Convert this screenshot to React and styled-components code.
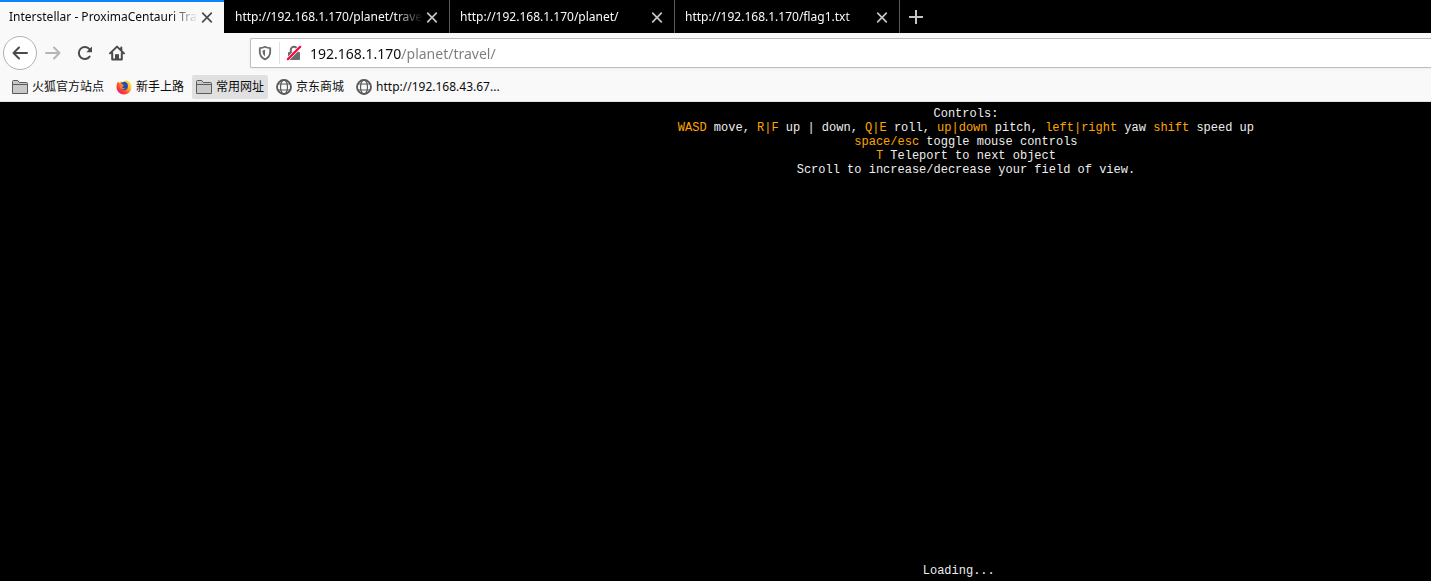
import React from 'react';
import styled, { createGlobalStyle, css } from 'styled-components';

const GlobalStyle = createGlobalStyle`
  *, *::before, *::after { box-sizing: border-box; }
  body {
    margin: 0;
    background: #000;
    font-family: "Noto Sans", "Noto Sans CJK SC", sans-serif;
    font-size: 12px;
    line-height: 16px;
    color: #0c0c0d;
    overflow-x: hidden;
  }
  button, input { font: inherit; color: inherit; margin: 0; }
  svg { display: block; flex: none; }
`;

const Browser = styled.div`
  display: flex;
  flex-direction: column;
  min-height: 100vh;
`;

const TabStrip = styled.div`
  display: flex;
  height: 33px;
  background: #000;
`;

const Tab = styled.div`
  display: flex;
  align-items: center;
  flex: 0 1 225px;
  min-width: 0;
  padding: 0 8px 0 10px;
  background: #000;
  color: #f9f9fa;
  border-left: 1px solid ${({ $divided }) => ($divided ? '#5a5a5a' : 'transparent')};
  ${({ $active }) => $active && css`
    flex-basis: 224px;
    padding-left: 9px;
    background: #f9f9f9;
    color: #0c0c0d;
    border-left: 0;
    box-shadow: inset 0 2px #0a84ff;
  `}
`;

const TabTitle = styled.button`
  flex: 1 1 0;
  min-width: 0;
  height: 33px;
  padding: 0;
  border: 0;
  background: none;
  text-align: left;
  white-space: nowrap;
  overflow: hidden;
  mask-image: linear-gradient(to left, transparent, #000 28px);
`;

const IconButton = styled.button`
  display: flex;
  align-items: center;
  justify-content: center;
  flex: none;
  width: ${({ $size }) => $size}px;
  height: ${({ $size }) => $size}px;
  padding: 0;
  border: 0;
  border-radius: 2px;
  background: none;
  color: ${({ $color }) => $color};
`;

const NewTabArea = styled.div`
  display: flex;
  align-items: center;
  border-left: 1px solid #5a5a5a;
`;

const NavBar = styled.div`
  display: flex;
  align-items: center;
  height: 40px;
  padding-left: 3px;
  background: #f9f9f9;
`;

const BackButton = styled(IconButton)`
  border: 1px solid #b1b1b1;
  border-radius: 50%;
  background: #fff;
`;

const NavButtons = styled.div`
  display: flex;
  align-items: center;
  width: 247px;
`;

const AddressBar = styled.form`
  display: flex;
  align-items: center;
  flex: 1;
  height: 30px;
  padding-left: 3px;
  border: 1px solid #bdbdbd;
  border-right: 0;
  border-radius: 2px 0 0 2px;
  background: #fff;
  box-shadow: 0 1px 3px rgba(0, 0, 0, 0.05);
`;

const Divider = styled.span`
  width: 1px;
  height: 22px;
  margin: 0 4px 0 3px;
  background: #e1e1e1;
`;

const AddressInput = styled.input`
  flex: 1;
  min-width: 0;
  height: 26px;
  padding: 0;
  margin-left: 6px;
  border: 0;
  outline: 0;
  font-size: 14px;
  color: transparent;
  caret-color: #0c0c0d;
  background: linear-gradient(to right, #0c0c0d 92px, #7c7c7d 92px);
  background-clip: text;
`;

const BookmarkBar = styled.nav`
  display: flex;
  align-items: center;
  height: 29px;
  padding-left: 8px;
  gap: 4px;
  background: #f9f9f9;
  border-bottom: 1px solid #e0e0e1;
`;

const Bookmark = styled.a`
  display: flex;
  align-items: center;
  gap: 4px;
  height: 24px;
  padding: 0 4px;
  border-radius: 2px;
  color: #0c0c0d;
  text-decoration: none;
  white-space: nowrap;
  background: ${({ $highlighted }) => ($highlighted ? '#e0e0e1' : 'none')};
`;

const Page = styled.main`
  display: flex;
  flex-direction: column;
  justify-content: space-between;
  flex: 1;
  padding: 5px 0 3px;
  background: #000;
  color: #eee;
  font-family: "Liberation Mono", monospace;
  font-size: 12px;
  line-height: 14px;
  text-align: center;
  white-space: nowrap;
`;

const Controls = styled.section`
  padding-left: 35%;
`;

const Line = styled.div``;

const Key = styled.b`
  font-weight: 400;
  color: #ffa500;
`;

const Loading = styled.div`
  padding-left: 34%;
`;

const Stroke = ({ size = 16, width = 2, children }) => (
  <svg width={size} height={size} viewBox="0 0 16 16" fill="none" stroke="currentColor"
    strokeWidth={width} strokeLinecap="round" strokeLinejoin="round" aria-hidden="true">
    {children}
  </svg>
);

const CloseIcon = () => <Stroke width={1.7}><path d="M3.7 4.2l8.6 8.6M12.3 4.2l-8.6 8.6" /></Stroke>;
const PlusIcon = () => <Stroke><path d="M8 1v14M1 8h14" strokeLinecap="butt" /></Stroke>;
const BackIcon = () => <Stroke><path d="M15 8H1.5M7 2.5L1.5 8 7 13.5" /></Stroke>;
const ForwardIcon = () => <Stroke><path d="M1 8h13.5M9 2.5L14.5 8 9 13.5" /></Stroke>;
const ReloadIcon = () => (
  <Stroke>
    <path d="M12.6 11.6A6 6 0 1 1 12.5 4.2" />
    <path d="M15 1.5v5.7H9.3z" fill="currentColor" stroke="none" />
  </Stroke>
);
const HomeIcon = () => (
  <Stroke>
    <path d="M1 8.4L8 1.6l7 6.8M3.2 8v6.6h9.6V8M12.3 2.5v3" />
    <path d="M6 14V9.2h4V14z" fill="currentColor" stroke="none" />
  </Stroke>
);
const ShieldIcon = () => (
  <Stroke width={1.8}>
    <path d="M8 1.8c1.8.9 3.6 1.3 5.2 1.4v3.6c0 3.6-2 6.2-5.2 7.6-3.2-1.4-5.2-4-5.2-7.6V3.2C4.4 3.1 6.2 2.7 8 1.8z" />
    <path d="M8 4.8v6.6C6.3 10.2 5.6 8.6 5.6 6.6V5.4z" fill="currentColor" stroke="none" />
  </Stroke>
);
const InsecureIcon = () => (
  <svg width="16" height="16" viewBox="0 0 16 16" aria-hidden="true">
    <path d="M4.8 7V5a3.2 3.2 0 0 1 6.4 0v2" fill="none" stroke="#6a6a6b" strokeWidth="2" />
    <rect x="2" y="7" width="12" height="8" rx="1" fill="#6a6a6b" />
    <path d="M1.5 14.5L14.5 1.5" stroke="#fff" strokeWidth="3.4" />
    <path d="M1.8 14.2L14.2 1.8" stroke="#ff0039" strokeWidth="2.2" strokeLinecap="round" />
  </svg>
);
const FolderIcon = () => (
  <svg width="16" height="16" viewBox="0 0 16 16" aria-hidden="true">
    <path d="M.5 14.5v-12a1 1 0 0 1 1-1h4.3l1.5 2h7.2a1 1 0 0 1 1 1v10z"
      fill="#c9c9ca" stroke="#5b5b5c" />
    <path d="M1 5.5h14.5" stroke="#5b5b5c" />
  </svg>
);
const GlobeIcon = () => (
  <svg width="16" height="16" viewBox="0 0 16 16" fill="none" stroke="#58585a" strokeWidth="1.2" aria-hidden="true">
    <circle cx="8" cy="8" r="7" strokeWidth="1.8" />
    <ellipse cx="8" cy="8" rx="3.5" ry="7" />
    <path d="M2 5h12M2 11h12" />
  </svg>
);
const FirefoxIcon = () => (
  <svg width="16" height="16" viewBox="0 0 16 16" aria-hidden="true">
    <defs>
      <linearGradient id="flame" x1="1" y1="0" x2="0" y2="1">
        <stop offset="0" stopColor="#fff044" />
        <stop offset=".35" stopColor="#ffbd2f" />
        <stop offset=".6" stopColor="#ff4f2e" />
        <stop offset="1" stopColor="#e6007a" />
      </linearGradient>
    </defs>
    <path d="M2 2.5L3.5 4 5.5 2 6 3.8 10 1.2c3.5 1 5.5 3.6 5.5 7A7.4 7.4 0 0 1 8 15.5 7.3 7.3 0 0 1 .5 8.5C.5 6 1 4 2 2.5z" fill="url(#flame)" />
    <path d="M5.6 3.8C8 1.9 11 3 11.7 5.5c.9 3-.8 5.7-3.7 5.8-2.4 0-3.8-1.5-3.8-3.5 1 .8 2.3.5 3.3-.3L5.4 6z" fill="#1e4fb8" />
    <path d="M3.4 4.6l3 .4 1.8 1.2-2 1.1c-.5 1.7 1.2 2.5 3 1.7-.8 2.2-4.8 2.2-5.8-.9z" fill="#ff7a20" />
  </svg>
);

const tabs = [
  { title: 'Interstellar - ProximaCentauri Travel', active: true },
  { title: 'http://192.168.1.170/planet/travel/' },
  { title: 'http://192.168.1.170/planet/' },
  { title: 'http://192.168.1.170/flag1.txt' },
];

const bookmarks = [
  { label: '火狐官方站点', Icon: FolderIcon },
  { label: '新手上路', Icon: FirefoxIcon },
  { label: '常用网址', Icon: FolderIcon, highlighted: true },
  { label: '京东商城', Icon: GlobeIcon },
  { label: 'http://192.168.43.67...', Icon: GlobeIcon },
];

export default function App() {
  return (
    <Browser>
      <GlobalStyle />
      <TabStrip>
        {tabs.map(({ title, active }, index) => (
          <Tab key={title} $active={active} $divided={index > 0 && !tabs[index - 1].active}>
            <TabTitle type="button">{title}</TabTitle>
            <IconButton type="button" $size={18} $color={active ? '#4a4a4b' : '#c4c4c4'} aria-label="Close tab">
              <CloseIcon />
            </IconButton>
          </Tab>
        ))}
        <NewTabArea>
          <IconButton type="button" $size={32} $color="#c4c4c4" aria-label="New tab"><PlusIcon /></IconButton>
        </NewTabArea>
      </TabStrip>
      <NavBar>
        <NavButtons>
          <BackButton type="button" $size={34} $color="#4a4a4b" aria-label="Back"><BackIcon /></BackButton>
          <IconButton type="button" $size={32} $color="#b5b5b6" aria-label="Forward"><ForwardIcon /></IconButton>
          <IconButton type="button" $size={32} $color="#4a4a4b" aria-label="Reload"><ReloadIcon /></IconButton>
          <IconButton type="button" $size={32} $color="#4a4a4b" aria-label="Home"><HomeIcon /></IconButton>
        </NavButtons>
        <AddressBar>
          <IconButton type="button" $size={22} $color="#6a6a6b" aria-label="Tracking protection"><ShieldIcon /></IconButton>
          <Divider />
          <IconButton type="button" $size={20} $color="#6a6a6b" aria-label="Connection is not secure"><InsecureIcon /></IconButton>
          <AddressInput type="text" aria-label="Address" defaultValue="192.168.1.170/planet/travel/" />
        </AddressBar>
      </NavBar>
      <BookmarkBar aria-label="Bookmarks">
        {bookmarks.map(({ label, Icon, highlighted }) => (
          <Bookmark key={label} href="#" $highlighted={highlighted}><Icon />{label}</Bookmark>
        ))}
      </BookmarkBar>
      <Page>
        <Controls>
          <Line>Controls:</Line>
          <Line>
            <Key>WASD</Key> move, <Key>R|F</Key> up | down, <Key>Q|E</Key> roll, <Key>up|down</Key> pitch,{' '}
            <Key>left|right</Key> yaw <Key>shift</Key> speed up
          </Line>
          <Line><Key>space/esc</Key> toggle mouse controls</Line>
          <Line><Key>T</Key> Teleport to next object</Line>
          <Line>Scroll to increase/decrease your field of view.</Line>
        </Controls>
        <Loading>Loading...</Loading>
      </Page>
    </Browser>
  );
}
